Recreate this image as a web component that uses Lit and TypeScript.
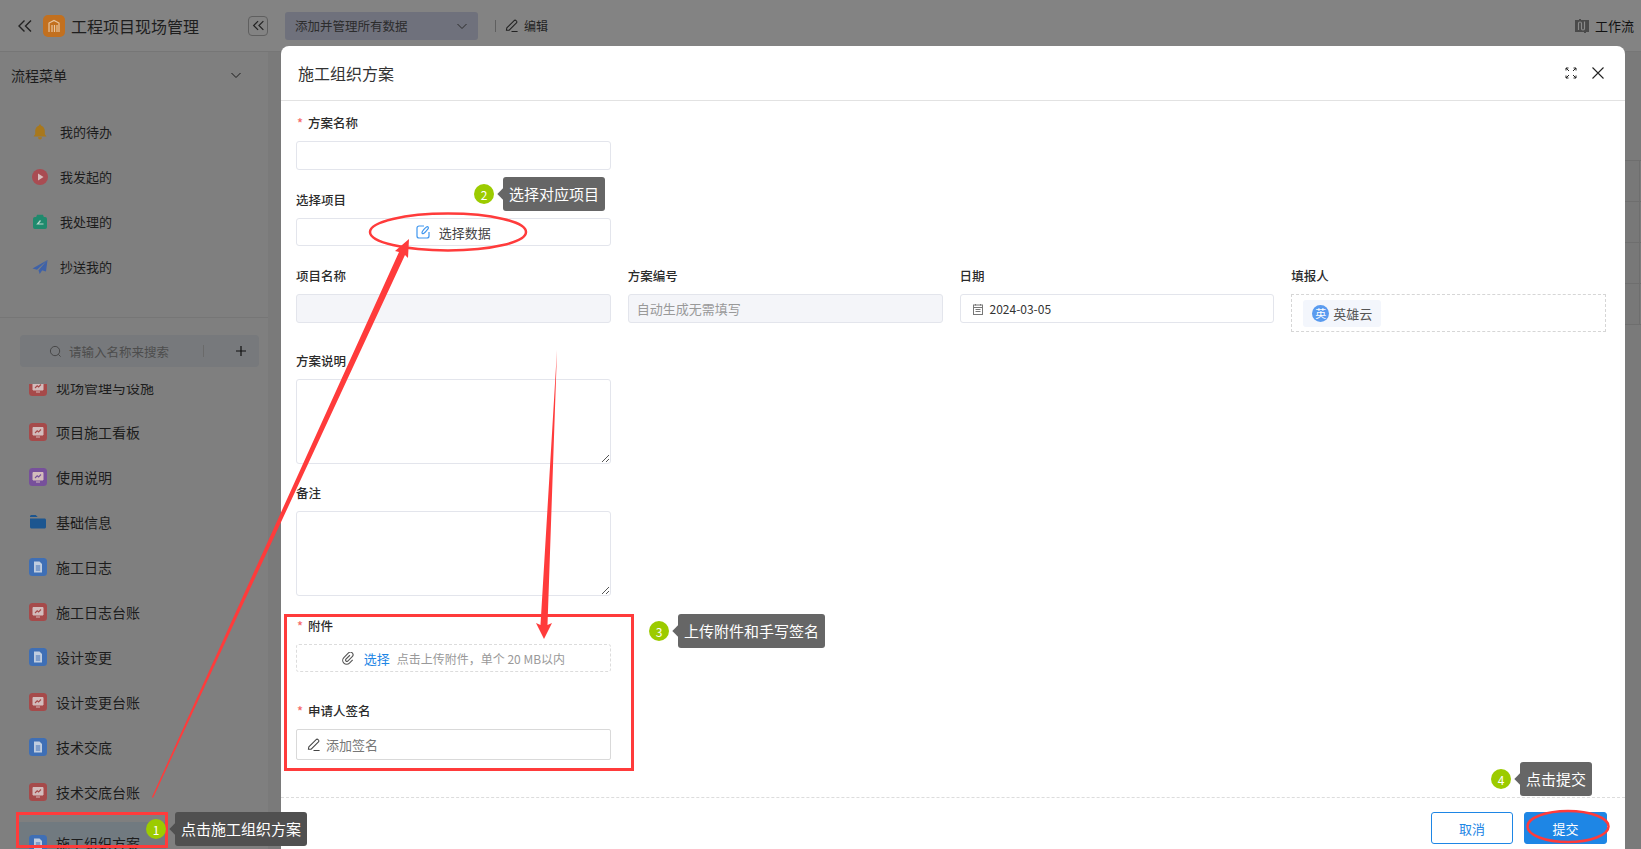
import { LitElement, html, css } from 'lit';
import { customElement } from 'lit/decorators.js';

const chevrons = html`<svg viewBox="0 0 16 16" width="16" height="16" fill="none" stroke="currentColor" stroke-width="1.4"><path d="M7.5 2.5 2 8l5.5 5.5M14 2.5 8.5 8l5.5 5.5" /></svg>`;
const chevronDown = html`<svg viewBox="0 0 12 12" width="12" height="12" fill="none" stroke="currentColor" stroke-width="1"><path d="M1.5 4 6 8.5 10.5 4" /></svg>`;
const pencil = html`<svg viewBox="0 0 16 16" width="15" height="15" fill="none" stroke="currentColor" stroke-width="1.1"><path d="M3 10.5 10.8 2.7a1.4 1.4 0 0 1 2 0l.5.5a1.4 1.4 0 0 1 0 2L5.5 13H2.6zM8 14.4h6.5" /></svg>`;

const bell = html`<svg viewBox="0 0 16 16" width="16" height="16" fill="#a8781c"><path d="M8 .5c.7 0 1.1.5 1.2 1.2C11.500 2.400 12.800 4.400 12.800 7v3.300L14.500 12.500H1.500L3.200 10.300V7c0-2.600 1.300-4.600 3.600-5.300C6.900 1 7.300.5 8 .5zM6 13.300h4C9.800 14.800 9 15.500 8 15.500S6.200 14.800 6 13.300z" /></svg>`;
const play = html`<svg viewBox="0 0 16 16" width="16" height="16"><circle cx="8" cy="8" r="8" fill="#a94c52" /><path d="M6 4.500 11.500 8 6 11.500z" fill="#d9bcbc" /></svg>`;
const done = html`<svg viewBox="0 0 16 16" width="16" height="16"><path d="M5 .8h6l.8 2.200H4.200z" fill="#1f8a6d" /><rect x="1" y="3" width="14" height="12" rx="2" fill="#1f8a6d" /><path d="M8.500 6.500 5.500 10h6" fill="none" stroke="#b9d6cc" stroke-width="1.2" /></svg>`;
const plane = html`<svg viewBox="0 0 16 16" width="16" height="16" fill="#3f62a8"><path d="M15.500 1 .5 9.500l4.500 1.200zM15.500 1 6.500 11.300l1.200 3.700 2-3z" /><path d="M15.500 1 14 12.500l-5-1.500z" /></svg>`;

const board = (color: string) => html`<svg viewBox="0 0 18 18" width="18" height="18"><rect width="18" height="18" rx="3.500" fill=${color} /><path d="M4 4.500h10v7.500H4zM7 14h4" fill="#d3bcbc" stroke="#d3bcbc" stroke-width="1" /><path d="M6 10l2.200-2.200 1.400 1.200L12 6.500" fill="none" stroke=${color} stroke-width="1.100" /></svg>`;
const doc = html`<svg viewBox="0 0 18 18" width="18" height="18"><rect width="18" height="18" rx="3.500" fill="#3f6fb5" /><path d="M5 3.500h5.500L13 6v8.500H5z" fill="#c0cde0" /><path d="M6.800 8h4.400M6.800 10h4.400M6.800 12h4.400" stroke="#3f6fb5" stroke-width="1" /></svg>`;
const folder = html`<svg viewBox="0 0 18 18" width="18" height="18" fill="#1c5690"><path d="M1 3.500c0-.8.700-1.500 1.500-1.500h4.200l2 2H1z" /><path d="M1 5.500h14.500c.8 0 1.500.7 1.500 1.500v7c0 .8-.7 1.500-1.500 1.500h-13C1.700 15.500 1 14.800 1 14z" /></svg>`;

const topMenu = [
  { icon: bell, label: '我的待办' },
  { icon: play, label: '我发起的' },
  { icon: done, label: '我处理的' },
  { icon: plane, label: '抄送我的' },
];

const red = '#a64a4a';
const appMenu = [
  { icon: board(red), label: '现场管理与设施' },
  { icon: board(red), label: '项目施工看板' },
  { icon: board('#77509b'), label: '使用说明' },
  { icon: folder, label: '基础信息' },
  { icon: doc, label: '施工日志' },
  { icon: board(red), label: '施工日志台账' },
  { icon: doc, label: '设计变更' },
  { icon: board(red), label: '设计变更台账' },
  { icon: doc, label: '技术交底' },
  { icon: board(red), label: '技术交底台账' },
  { icon: doc, label: '施工组织方案', active: true },
];

const notes = [
  { n: 1, text: '点击施工组织方案', cls: 'note n1' },
  { n: 2, text: '选择对应项目', cls: 'note n2' },
  { n: 3, text: '上传附件和手写签名', cls: 'note n3' },
  { n: 4, text: '点击提交', cls: 'note n4' },
];

@customElement('app-root')
export class AppRoot extends LitElement {
  static styles = css`
    :host {
      display: block;
      position: relative;
      height: 849px;
      overflow: hidden;
      background: #7f7f7f;
      color: #1c1c1c;
      font-family: 'Noto Sans CJK SC', 'Noto Sans', sans-serif;
      font-size: 13px;
    }

    /* page behind the dialog, painted already dimmed */
    .topbar {
      display: flex;
      align-items: center;
      height: 52px;
      box-sizing: border-box;
      padding-left: 17px;
      background: #838383;
      border-bottom: 1px solid #767676;
    }
    .back {
      display: flex;
      color: #222;
    }
    .logo {
      display: flex;
      margin-left: 10px;
      width: 22px;
      height: 22px;
      border-radius: 5px;
      background: #c2701f;
      align-items: center;
      justify-content: center;
    }
    .app-title {
      margin-left: 6px;
      width: 177px;
      font-size: 16px;
      color: #1e1e1e;
    }
    .collapse {
      display: flex;
      align-items: center;
      justify-content: center;
      width: 20px;
      height: 20px;
      box-sizing: border-box;
      border: 1px solid #5f5f5f;
      border-radius: 4px;
      color: #222;
    }
    .collapse svg {
      width: 13px;
      height: 13px;
    }
    .view-select {
      display: flex;
      align-items: center;
      justify-content: space-between;
      width: 193px;
      height: 28px;
      box-sizing: border-box;
      margin-left: 17px;
      padding: 0 10px;
      border-radius: 3px;
      background: #6f717c;
      font-size: 12.500px;
      color: #2c2c2c;
    }
    .sep {
      width: 1px;
      height: 12px;
      margin: 0 8px 0 17px;
      background: #5f5f5f;
    }
    .edit {
      display: flex;
      align-items: center;
      gap: 5px;
      font-size: 12px;
      color: #222;
    }
    .flow {
      display: flex;
      align-items: center;
      gap: 6px;
      margin-left: auto;
      padding-right: 7px;
      color: #111;
    }
    .layout {
      display: flex;
      height: 797px;
    }
    .sidebar {
      display: flex;
      flex-direction: column;
      width: 268px;
      flex: none;
    }
    .menu-head {
      display: flex;
      align-items: center;
      justify-content: space-between;
      height: 46px;
      padding: 0 26px 0 11px;
      font-size: 14px;
    }
    .todo {
      padding-top: 11px;
      height: 208px;
      border-bottom: 1px solid #767676;
    }
    .todo-row {
      display: flex;
      align-items: center;
      gap: 12px;
      height: 45px;
      padding-left: 32px;
    }
    .search {
      display: flex;
      align-items: center;
      height: 32px;
      margin: 17px 9px 17px 20px;
      border-radius: 4px;
      background: #77797c;
      color: #4d4d4d;
      font-size: 12.500px;
    }
    .search svg:first-child {
      margin-left: 29px;
    }
    .search span {
      margin-left: 7px;
      width: 134px;
    }
    .search i {
      width: 1px;
      height: 12px;
      background: #6a6a6a;
    }
    .plus {
      margin-left: 31px;
      color: #111;
    }
    .apps {
      flex: 1;
      overflow: hidden;
      min-height: 0;
    }
    .apps-inner {
      margin-top: -20px;
    }
    .app-row {
      display: flex;
      align-items: center;
      gap: 9px;
      width: 148px;
      height: 45px;
      box-sizing: border-box;
      margin-left: 18px;
      padding-left: 11px;
      font-size: 14px;
      white-space: nowrap;
    }
    .app-row.active {
      height: 31px;
      margin-top: 8px;
      background: #717a80;
      align-items: flex-end;
    }
    .main {
      flex: 1;
      background: #7a7a7a;
      display: flex;
      flex-direction: column;
      align-items: flex-end;
      padding-top: 108px;
    }
    .table {
      width: 16px;
      border-top: 1px solid #6e6e6e;
      background: #7a7a7a;
    }
    .table div {
      height: 40px;
      border-bottom: 1px solid #6e6e6e;
      box-sizing: content-box;
      background: linear-gradient(to right, #787878 14px, #6e6e6e 14px, #6e6e6e 15px, #7c7c7c 15px);
    }

    /* dialog */
    .modal {
      position: absolute;
      left: 281px;
      top: 46px;
      width: 1344px;
      height: 803px;
      display: flex;
      flex-direction: column;
      background: #fff;
      border-radius: 8px 8px 0 0;
    }
    .modal-head {
      display: flex;
      align-items: center;
      flex: none;
      height: 55px;
      box-sizing: border-box;
      padding: 0 21px 0 17px;
      border-bottom: 1px solid #e2e2e2;
      font-size: 16px;
      color: #333;
    }
    .modal-head .tools {
      display: flex;
      align-items: center;
      gap: 15px;
      margin-left: auto;
      color: #222;
    }
    .form {
      flex: 1;
      display: flex;
      flex-direction: column;
      gap: 20px;
      padding: 12px 19px 0 15px;
    }
    .row {
      display: grid;
      grid-template-columns: repeat(4, 1fr);
      column-gap: 17px;
    }
    .label {
      height: 20px;
      line-height: 20px;
      margin-bottom: 8px;
      font-weight: 500;
      color: #2b2b2b;
      font-size: 12.500px;
    }
    .req::before {
      content: '*';
      color: #f56c6c;
      margin: 0 5px 0 1px;
    }
    .box {
      display: flex;
      align-items: center;
      box-sizing: border-box;
      height: 29px;
      padding: 0 8px;
      background: #fff;
      border: 1px solid #e3e5ec;
      border-radius: 3px;
    }
    .box.center {
      justify-content: center;
      height: 28px;
      gap: 9px;
      color: #444;
    }
    .box.off {
      background: #f4f5f9;
      color: #999;
    }
    .box.date {
      color: #333;
      gap: 6px;
      font-size: 12px;
      padding-left: 11px;
    }
    .person {
      display: flex;
      align-items: center;
      box-sizing: border-box;
      height: 38px;
      padding-left: 11px;
      border: 1px dashed #d6d6d6;
    }
    .chip {
      display: flex;
      align-items: center;
      gap: 4px;
      height: 27px;
      padding: 0 9px;
      border-radius: 3px;
      background: #f3f6fc;
      color: #555;
    }
    .avatar {
      width: 17px;
      height: 17px;
      border-radius: 50%;
      background: #5a9bef;
      color: #fff;
      font-size: 11px;
      line-height: 17px;
      text-align: center;
    }
    .area {
      height: 85px;
      box-sizing: border-box;
      border: 1px solid #e3e5ec;
      border-radius: 3px;
      position: relative;
    }
    .grip {
      position: absolute;
      right: 1px;
      bottom: 1px;
      display: flex;
      color: #555;
    }
    .upload {
      display: flex;
      align-items: center;
      justify-content: center;
      box-sizing: border-box;
      height: 28px;
      border: 1px dashed #dcdcdc;
      border-radius: 3px;
      font-size: 12px;
      color: #999;
    }
    .upload svg {
      color: #555;
      margin-right: 9px;
    }
    .upload b {
      font-weight: 400;
      font-size: 13px;
      color: #1e86e5;
      margin-right: 7px;
    }
    .sign {
      display: flex;
      align-items: center;
      gap: 5px;
      box-sizing: border-box;
      height: 31px;
      padding-left: 9px;
      border: 1px solid #d9d9d9;
      border-radius: 2px;
      color: #777;
    }
    .sign svg {
      color: #444;
    }
    .sign-row {
      margin-top: 9px;
    }
    .modal-foot {
      display: flex;
      justify-content: flex-end;
      gap: 11px;
      flex: none;
      height: 52px;
      box-sizing: border-box;
      padding: 14px 18px 0 0;
      border-top: 1px dashed #dcdcdc;
    }
    .btn {
      display: flex;
      align-items: center;
      justify-content: center;
      width: 82px;
      height: 32px;
      box-sizing: border-box;
      border: 1px solid #1e86e5;
      border-radius: 3px;
      color: #1e86e5;
    }
    .btn.primary {
      width: 83px;
      background: #1e86e5;
      color: #fff;
    }

    /* tutorial marks drawn over the screenshot */
    .marks {
      position: absolute;
      left: 0;
      top: 0;
      pointer-events: none;
    }
    .note {
      position: absolute;
      display: flex;
      align-items: center;
      color: #fff;
      font-size: 15px;
    }
    .badge {
      display: flex;
      align-items: center;
      justify-content: center;
      width: 20px;
      height: 20px;
      border-radius: 50%;
      background: #9ccb00;
      font-size: 12px;
      margin-right: 9px;
    }
    .tip {
      position: relative;
      padding: 0 6px;
      height: 34px;
      line-height: 33px;
      background: #666;
      border-radius: 3px;
      white-space: nowrap;
    }
    .tip::before {
      content: '';
      position: absolute;
      left: -4px;
      top: 13px;
      width: 8px;
      height: 8px;
      background: inherit;
      transform: rotate(45deg);
    }
    .n1 {
      left: 146px;
      top: 812px;
    }
    .n1 .tip {
      background: #505050;
    }
    .n2 {
      left: 474px;
      top: 177px;
    }
    .n3 {
      left: 649px;
      top: 614px;
    }
    .n4 {
      left: 1491px;
      top: 762px;
    }
  `;

  render() {
    return html`
      <div class="topbar">
        <span class="back">${chevrons}</span>
        <span class="logo">
          <svg viewBox="0 0 14 14" width="14" height="14" fill="none" stroke="#e8c6a0" stroke-width="1.200"><path d="M2 13V4l5-2.500L12 4v9M5 6v7M7.500 6v7M10 6v7" /></svg>
        </span>
        <span class="app-title">工程项目现场管理</span>
        <span class="collapse">${chevrons}</span>
        <span class="view-select">添加并管理所有数据 ${chevronDown}</span>
        <span class="sep"></span>
        <span class="edit">${pencil} 编辑</span>
        <span class="flow">
          <svg viewBox="0 0 14 14" width="14" height="14"><path d="M0 1h4V0h2v1h8v12h-3v1H9v-1H0z" fill="#4a4a4a" /><path d="M3.500 11V4.500a1.500 1.500 0 0 1 3 0v5a1.500 1.500 0 0 0 3 0V2.500" fill="none" stroke="#8a8a8a" stroke-width="1.200" /></svg>
          工作流
        </span>
      </div>

      <div class="layout">
        <aside class="sidebar">
          <div class="menu-head">流程菜单 ${chevronDown}</div>
          <div class="todo">
            ${topMenu.map((item) => html`<div class="todo-row">${item.icon}<span>${item.label}</span></div>`)}
          </div>
          <div class="search">
            <svg viewBox="0 0 14 14" width="13" height="13" fill="none" stroke="#444" stroke-width="1"><circle cx="6.500" cy="6.500" r="5" /><path d="M10 10l2.500 2.500" /></svg>
            <span>请输入名称来搜索</span>
            <i></i>
            <svg class="plus" viewBox="0 0 12 12" width="12" height="12" stroke="#111" stroke-width="1.200"><path d="M6 1v10M1 6h10" /></svg>
          </div>
          <div class="apps">
            <div class="apps-inner">
              ${appMenu.map(
                (item) => html`<div class="app-row ${item.active ? 'active' : ''}">${item.icon}<span>${item.label}</span></div>`
              )}
            </div>
          </div>
        </aside>
        <div class="main">
          <div class="table"><div></div><div></div><div></div><div></div></div>
        </div>
      </div>

      <section class="modal">
        <header class="modal-head">
          施工组织方案
          <span class="tools">
            <svg viewBox="0 0 12 12" width="12" height="12" fill="none" stroke="#222" stroke-width="1"><path d="M1 1l3 3M11 1 8 4M1 11l3-3M11 11 8 8M1 3.500V1h2.500M8.500 1H11v2.500M1 8.500V11h2.500M8.500 11H11V8.500" /></svg>
            <svg viewBox="0 0 12 12" width="12" height="12" fill="none" stroke="#222" stroke-width="1.100"><path d="M.5.5l11 11M11.500.5l-11 11" /></svg>
          </span>
        </header>

        <div class="form">
          <div class="row">
            <div>
              <div class="label req">方案名称</div>
              <div class="box"></div>
            </div>
          </div>
          <div class="row">
            <div>
              <div class="label">选择项目</div>
              <div class="box center">
                <svg viewBox="0 0 14 14" width="14" height="14" fill="none" stroke="#3f96ee" stroke-width="1.200"><path d="M8 1H3a2 2 0 0 0-2 2v8a2 2 0 0 0 2 2h8a2 2 0 0 0 2-2V7" /><path d="M6 7.500c0-1.500 3-4.500 4.500-5.500s2.500.5 1.500 1.800S8.500 8 7.500 8.500 6 8.500 6 7.500z" /></svg>
                选择数据
              </div>
            </div>
          </div>
          <div class="row">
            <div>
              <div class="label">项目名称</div>
              <div class="box off"></div>
            </div>
            <div>
              <div class="label">方案编号</div>
              <div class="box off">自动生成无需填写</div>
            </div>
            <div>
              <div class="label">日期</div>
              <div class="box date">
                <svg viewBox="0 0 12 12" width="12" height="12" fill="none" stroke="#777" stroke-width="1"><rect x="1.500" y="2" width="9" height="9.500" /><path d="M1.500 4.500h9M3.500 1v1.500M8.500 1v1.500M3.500 6.500h5M3.500 8.500h5" /></svg>
                2024-03-05
              </div>
            </div>
            <div>
              <div class="label">填报人</div>
              <div class="person">
                <span class="chip"><span class="avatar">英</span>英雄云</span>
              </div>
            </div>
          </div>
          <div class="row" style="margin-top: -1px">
            <div>
              <div class="label">方案说明</div>
              <div class="area">
                <span class="grip"><svg viewBox="0 0 8 8" width="8" height="8" stroke="currentColor" stroke-width="1"><path d="M1 8l7-7M5 8l3-3" /></svg></span>
              </div>
            </div>
          </div>
          <div class="row" style="margin-top: -1px">
            <div>
              <div class="label">备注</div>
              <div class="area">
                <span class="grip"><svg viewBox="0 0 8 8" width="8" height="8" stroke="currentColor" stroke-width="1"><path d="M1 8l7-7M5 8l3-3" /></svg></span>
              </div>
            </div>
          </div>
          <div class="row">
            <div>
              <div class="label req">附件</div>
              <div class="upload">
                <svg viewBox="0 0 14 14" width="13" height="13" fill="none" stroke="currentColor" stroke-width="1.200"><path d="M8.500 3.500 4 8a1.500 1.500 0 0 0 2 2l5-5a2.800 2.800 0 0 0-4-4L2 6a4 4 0 0 0 6 6l3.500-3.500" /></svg>
                <b>选择</b>点击上传附件，单个 20 MB以内
              </div>
            </div>
          </div>
          <div class="row sign-row">
            <div>
              <div class="label req">申请人签名</div>
              <div class="sign">${pencil}添加签名</div>
            </div>
          </div>
        </div>

        <footer class="modal-foot">
          <span class="btn">取消</span>
          <span class="btn primary">提交</span>
        </footer>
      </section>

      <svg class="marks" width="1641" height="849" viewBox="0 0 1641 849" fill="none" stroke="#ff3b3b">
        <rect x="17.500" y="813.500" width="149" height="33" stroke-width="3" />
        <rect x="285.500" y="615.500" width="347" height="154" stroke-width="3" />
        <ellipse cx="448" cy="232" rx="78" ry="18.500" stroke-width="2.500" />
        <ellipse cx="1568" cy="826.500" rx="40.500" ry="15.500" stroke-width="2.500" />
        <polygon
          fill="#ff3b3b"
          stroke="none"
          points="152,797 399,252 395,251 409,239 408,258 405,255 153,798"
        />
        <polygon
          fill="#ff3b3b"
          stroke="none"
          points="557,350 547.500,625 552,623 544,639 536,623 540.500,625"
        />
      </svg>

      ${notes.map(
        (note) => html`<div class=${note.cls}><span class="badge">${note.n}</span><span class="tip">${note.text}</span></div>`
      )}
    `;
  }
}
